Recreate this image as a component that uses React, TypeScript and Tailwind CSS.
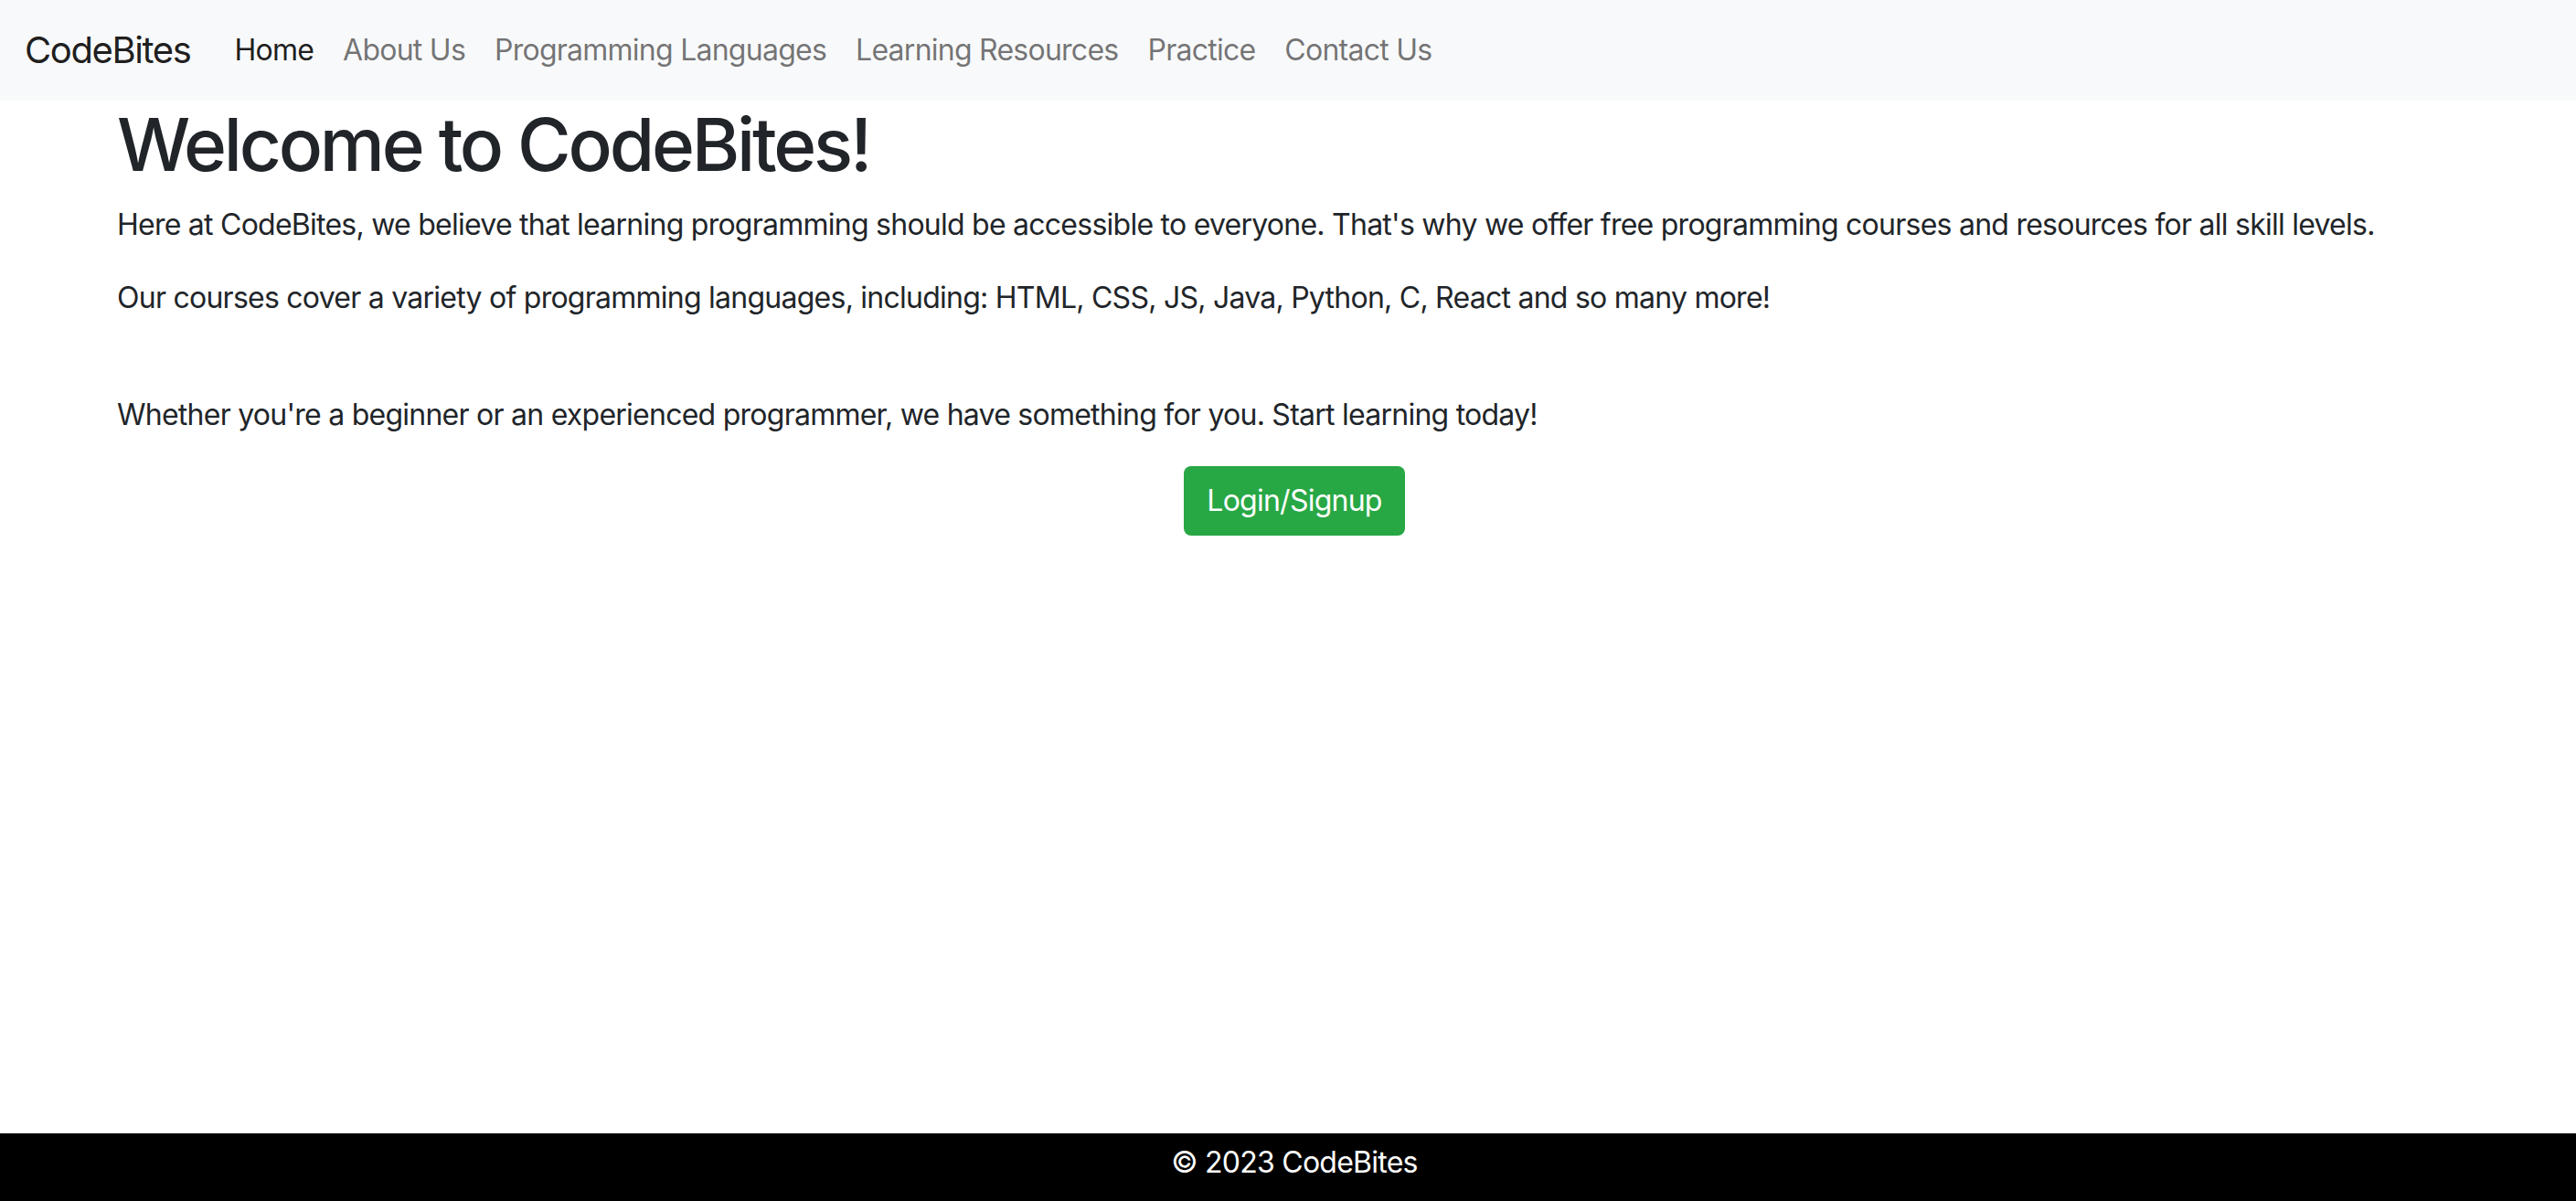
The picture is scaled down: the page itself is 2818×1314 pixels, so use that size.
const links = [
  { label: 'Home', active: true },
  { label: 'About Us' },
  { label: 'Programming Languages' },
  { label: 'Learning Resources' },
  { label: 'Practice' },
  { label: 'Contact Us' },
]

function Navbar() {
  return (
    <nav className="flex h-[110px] items-center bg-[#f8f9fa] px-[27px]">
      <a
        href="#"
        className="mr-[32px] py-[10px] text-[40px] leading-[60px] tracking-[-1.4px] text-[rgba(0,0,0,0.9)]"
      >
        CodeBites
      </a>
      <ul className="flex">
        {links.map((l) => (
          <li key={l.label}>
            <a
              href="#"
              className={`block px-[16px] py-[16px] text-[32px] leading-[48px] tracking-[-0.75px] ${
                l.active ? 'text-[rgba(0,0,0,0.9)]' : 'text-[rgba(0,0,0,0.55)]'
              }`}
            >
              {l.label}
            </a>
          </li>
        ))}
      </ul>
    </nav>
  )
}

export default function App() {
  return (
    <div className="flex min-h-screen flex-col bg-white font-['Inter','Liberation_Sans',sans-serif] text-[#212529]">
      <Navbar />

      <main className="flex-1 px-[128px] text-[32px] leading-[48px] tracking-[-0.75px]">
        <h1 className="mb-[16px] text-[80px] font-medium leading-[96px] tracking-[-3.2px]">Welcome to CodeBites!</h1>
        <p className="mb-[32px]">
          Here at CodeBites, we believe that learning programming should be accessible to everyone. That's why we
          offer free programming courses and resources for all skill levels.
        </p>
        <p className="mb-[32px]">
          Our courses cover a variety of programming languages, including: HTML, CSS, JS, Java, Python, C, React and
          so many more!
        </p>
        <div className="h-[48px]" />
        <p className="mb-[32px]">
          Whether you're a beginner or an experienced programmer, we have something for you. Start learning today!
        </p>
        <div className="flex justify-center pl-[14px]">
          <button className="h-[76px] w-[242px] rounded-[8px] bg-[#28a745] text-white">Login/Signup</button>
        </div>
      </main>

      <footer className="flex h-[74px] items-center justify-center bg-black pb-[10px] pl-[14px] text-[32px] tracking-[-0.75px] text-white">
        © 2023 CodeBites
      </footer>
    </div>
  )
}
